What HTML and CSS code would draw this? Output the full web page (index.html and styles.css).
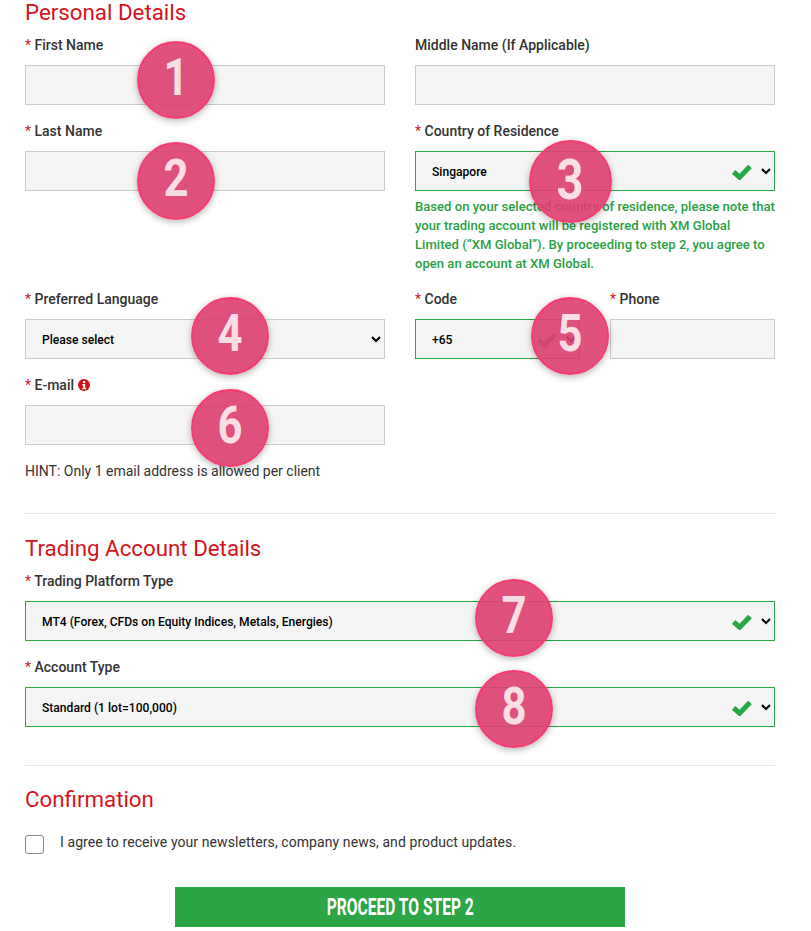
FILE: index.html
```html
<!DOCTYPE html>
<html lang="en">
<head>
<meta charset="utf-8">
<title>Personal Details</title>
<link rel="stylesheet" href="styles.css">
</head>
<body>
<form class="page">
  <section class="sec-first">
    <h2 class="title">Personal Details</h2>
    <div class="grid">
      <div class="field"><label class="lbl"><span class="req">*</span> First Name</label><input class="ctl" type="text"></div>
      <div class="field"><label class="lbl">Middle Name (If Applicable)</label><input class="ctl" type="text"></div>
      <div class="field"><label class="lbl"><span class="req">*</span> Last Name</label><input class="ctl" type="text"></div>
      <div class="field">
        <label class="lbl"><span class="req">*</span> Country of Residence</label>
        <div class="selwrap">
          <select class="ctl sel ok"><option>Singapore</option></select>
          <svg class="check" viewBox="0 0 20 16"><path d="M1.6 8 7.6 13.2 18 2.4" fill="none" stroke="#28a745" stroke-width="5"/></svg>
        </div>
        <p class="note">Based on your selected country of residence, please note that your trading account will be registered with XM Global Limited (“XM Global”). By proceeding to step 2, you agree to open an account at XM Global.</p>
      </div>
      <div class="field"><label class="lbl"><span class="req">*</span> Preferred Language</label><select class="ctl sel"><option>Please select</option></select></div>
      <div class="pair">
        <div class="field">
          <label class="lbl"><span class="req">*</span> Code</label>
          <div class="selwrap">
            <select class="ctl sel ok"><option>+65</option></select>
            <svg class="check" viewBox="0 0 20 16"><path d="M1.6 8 7.6 13.2 18 2.4" fill="none" stroke="#28a745" stroke-width="5"/></svg>
          </div>
        </div>
        <div class="field"><label class="lbl"><span class="req">*</span> Phone</label><input class="ctl" type="text"></div>
      </div>
      <div class="field">
        <label class="lbl"><span class="req">*</span> E-mail
          <svg class="info" viewBox="0 0 12 12"><circle cx="6" cy="6" r="6" fill="#d0121b"/><rect x="5" y="2" width="2.2" height="2" fill="#fff"/><path d="M4.2 5h3v4h1v1.2H4.2V9h1V6.2h-1z" fill="#fff"/></svg>
        </label>
        <input class="ctl" type="text">
      </div>
    </div>
    <p class="hint">HINT: Only 1 email address is allowed per client</p>
  </section>
  <hr class="rule rule-a">
  <section>
    <h2 class="title">Trading Account Details</h2>
    <div class="field">
      <label class="lbl"><span class="req">*</span> Trading Platform Type</label>
      <div class="selwrap">
        <select class="ctl sel ok"><option>MT4 (Forex, CFDs on Equity Indices, Metals, Energies)</option></select>
        <svg class="check" viewBox="0 0 20 16"><path d="M1.6 8 7.6 13.2 18 2.4" fill="none" stroke="#28a745" stroke-width="5"/></svg>
      </div>
    </div>
    <div class="field">
      <label class="lbl"><span class="req">*</span> Account Type</label>
      <div class="selwrap">
        <select class="ctl sel ok"><option>Standard (1 lot=100,000)</option></select>
        <svg class="check" viewBox="0 0 20 16"><path d="M1.6 8 7.6 13.2 18 2.4" fill="none" stroke="#28a745" stroke-width="5"/></svg>
      </div>
    </div>
  </section>
  <hr class="rule rule-b">
  <section>
    <h2 class="title">Confirmation</h2>
    <label class="agree"><input class="box" type="checkbox"><span>I agree to receive your newsletters, company news, and product updates.</span></label>
    <div class="actions"><button class="proceed" type="button"><span>PROCEED TO STEP 2</span></button></div>
  </section>

  <div class="badge b1"><span>1</span></div>
  <div class="badge b2"><span>2</span></div>
  <div class="badge b3"><span>3</span></div>
  <div class="badge b4"><span>4</span></div>
  <div class="badge b5"><span>5</span></div>
  <div class="badge b6"><span>6</span></div>
  <div class="badge b7"><span>7</span></div>
  <div class="badge b8"><span>8</span></div>
</form>
</body>
</html>
```
FILE: styles.css
```css
* { box-sizing: border-box; }
html, body { margin: 0; padding: 0; background: #fff; }
body { font-family: Roboto, "Liberation Sans", sans-serif; color: #333; height: 931px; overflow: hidden; }
.page { position: relative; padding: 0 36px 0 25px; width: 811px; }
.title { margin: 0 0 10px; font-size: 22.3px; line-height: 25px; font-weight: 400; color: #d4141c; }
.grid { display: grid; grid-template-columns: 360px 360px; column-gap: 30px; align-items: start; }
.pair { display: grid; grid-template-columns: 165px 165px; column-gap: 30px; }
.field { margin-bottom: 16px; }
.lbl { display: block; height: 20px; line-height: 20px; margin-bottom: 10px; font-size: 14px; font-weight: 500; color: #333; white-space: nowrap; }
.req { color: #d4141c; font-weight: 400; }
.ctl { display: block; width: 100%; height: 40px; margin: 0; background: #f5f5f5; border: 1px solid #ccc; border-radius: 0; outline: 0; }
.sel { padding: 2px 12px 0; font-family: Roboto, "Liberation Sans", sans-serif; font-size: 12.1px; font-weight: 500; color: #000; }
.ok { border-color: #2ba545; }
.selwrap { position: relative; }
.check { position: absolute; right: 23px; top: 13px; width: 20px; height: 16px; }
.info { width: 12px; height: 12px; vertical-align: -1px; }
.note { margin: 6px 0 0; font-size: 13.1px; line-height: 19px; font-weight: 500; color: #2a9f45; }
.hint { margin: 0; font-size: 14px; line-height: 20px; color: #333; }
.rule { border: 0; height: 1px; background: #e5e5e5; margin: 0; }
.rule-a { margin: 32px 0 22px; }
.rule-b { margin: 38px 0 21px; }
.agree { display: flex; align-items: flex-start; margin-top: 23px; font-size: 14px; line-height: 20px; color: #333; letter-spacing: .08px; }
.agree span { margin-left: 16px; margin-top: -3px; }
.box { appearance: none; -webkit-appearance: none; width: 19px; height: 19px; margin: 0; flex: none; background: #fff; border: 1px solid #888; border-radius: 3px; }
.actions { display: flex; justify-content: center; margin-top: 33px; }
.proceed { width: 450px; height: 40px; padding: 0; border: 0; background: #2ba545; color: #fff; font-family: Roboto, "Liberation Sans", sans-serif; font-size: 24px; font-weight: 700; cursor: pointer; }
.proceed span { display: inline-block; white-space: nowrap; transform: scaleX(.65); }
.badge { position: absolute; width: 78px; height: 78px; padding-bottom: 4px; border-radius: 50%; background: rgba(222, 62, 112, .9); border: 2px solid #f53b70; box-shadow: 0 2px 7px rgba(0, 0, 0, .3); display: flex; align-items: center; justify-content: center; color: rgba(255, 255, 255, .82); font-size: 52px; font-weight: 700; line-height: 1; }
.badge span { display: block; transform: scaleX(.84); }
.b1 { left: 137px; top: 41px; }
.b2 { left: 137px; top: 142px; }
.b3 { left: 529px; top: 140px; width: 83px; height: 83px; font-size: 56px; }
.b4 { left: 191px; top: 297px; }
.b5 { left: 531px; top: 297px; }
.b6 { left: 191px; top: 389px; }
.b7 { left: 475px; top: 579px; }
.b8 { left: 475px; top: 670px; }
```
